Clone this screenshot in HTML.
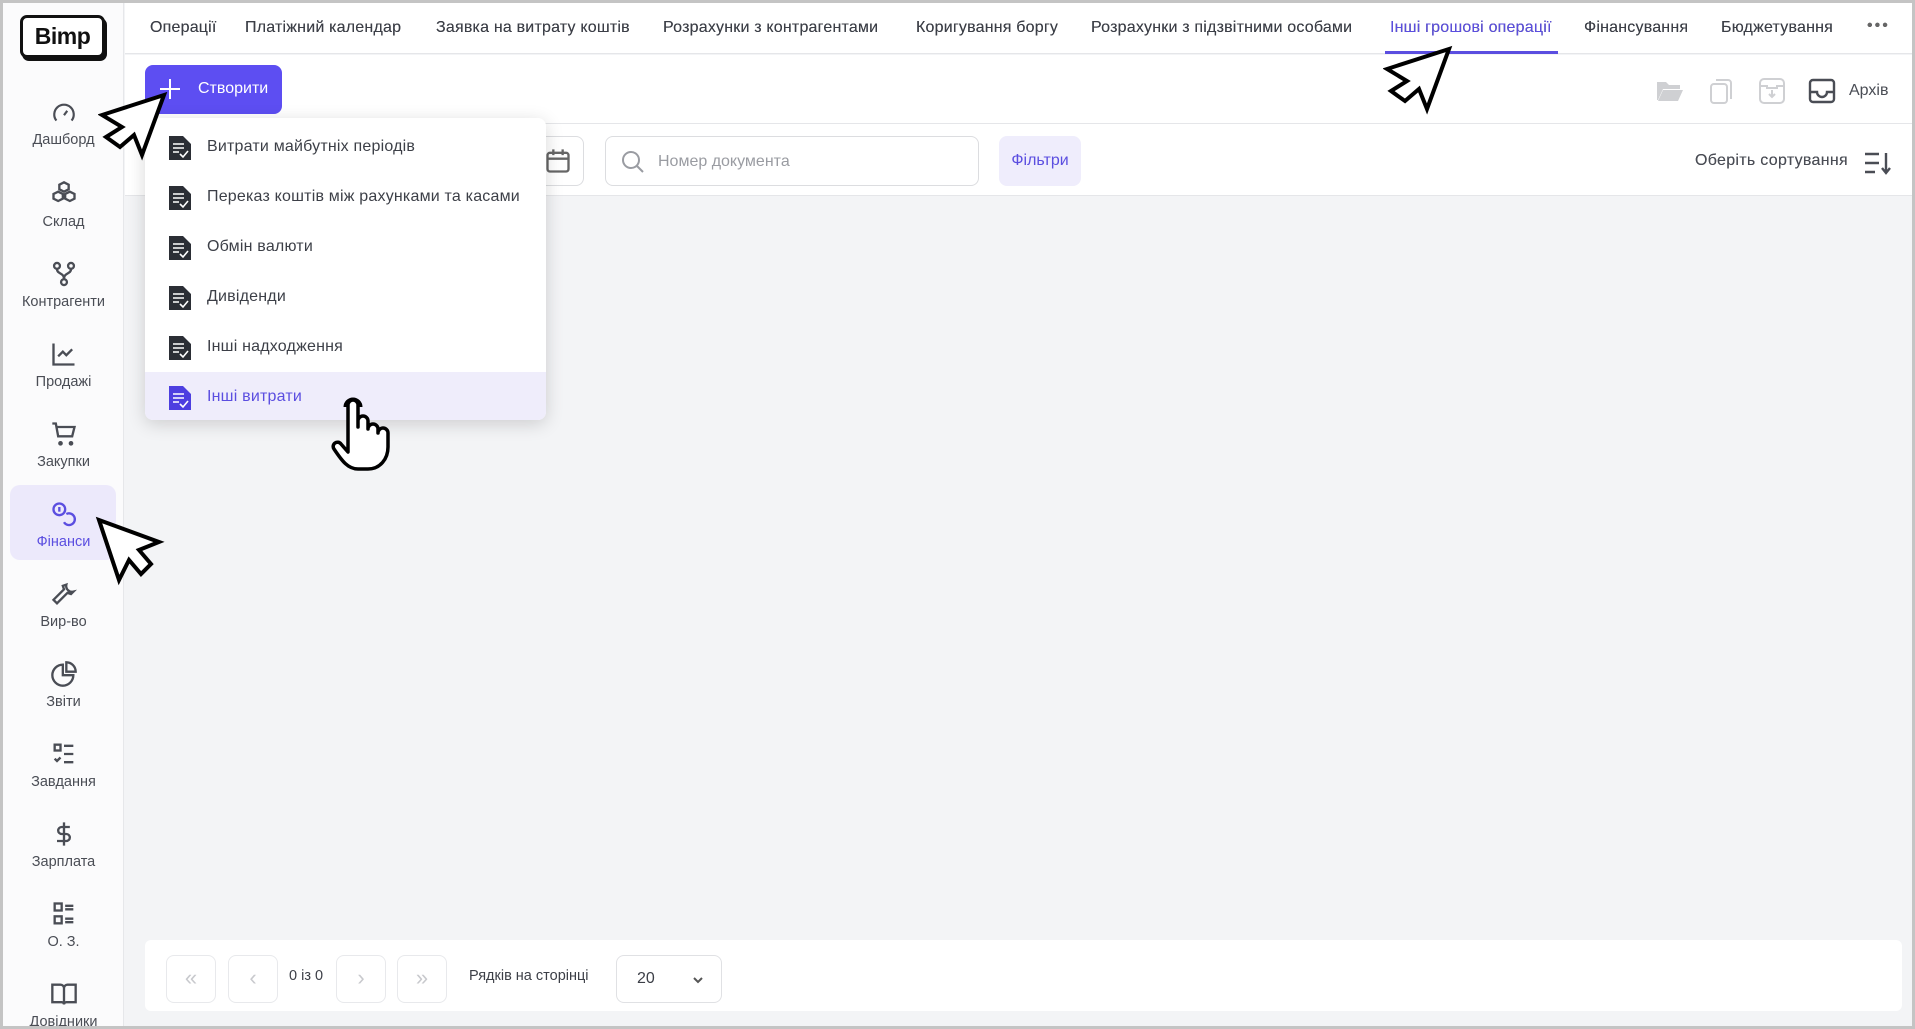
<!DOCTYPE html>
<html><head><meta charset="utf-8"><style>
*{box-sizing:border-box;margin:0;padding:0}
body{width:1915px;height:1029px;overflow:hidden;background:#c4c4c4;font-family:"Liberation Sans","Noto Sans CJK SC",sans-serif;color:#3c3f47;position:relative}
.frame{position:absolute;left:3px;top:3px;width:1909px;height:1023px;background:#f3f4f6;overflow:hidden}
.abs{position:absolute}
.side{position:absolute;left:0;top:0;width:121px;height:1023px;background:#fbfbfc;border-right:1px solid #e6e7ea}
.logo{position:absolute;left:17px;top:12px;width:85px;height:43px;border:3px solid #111;border-radius:7px;box-shadow:2px 3px 0 #111;font-weight:bold;font-size:23px;color:#111;text-align:center;line-height:36px;background:#fff;letter-spacing:-0.5px}
.it{position:absolute;left:0;width:121px;text-align:center;font-size:14.5px;color:#4a4d55}
.it svg{display:block;margin:0 auto 6px}
.top{position:absolute;left:122px;top:0;right:0;height:51px;background:#fff;border-bottom:1px solid #e5e6e9}
.tab{position:absolute;top:16px;font-size:16px;color:#3c3f47;white-space:nowrap;text-shadow:0 0 .3px #3c3f47;letter-spacing:0.2px}
.bar{position:absolute;left:122px;top:52px;right:0;height:140px;background:#fff}
.line{position:absolute;left:122px;right:0;height:1px;background:#e5e6e9}
.btn{position:absolute;left:142px;top:62px;width:137px;height:49px;background:#5d4ef2;border-radius:8px;color:#fff;font-size:16px}
.dd{position:absolute;left:142px;top:115px;width:401px;height:302px;background:#fff;border-radius:8px;box-shadow:0 4px 18px rgba(0,0,0,.16)}
.di{position:absolute;left:0;width:401px;height:50px;font-size:16px;color:#3c3f47}
.di svg{position:absolute;left:23px;top:13px}
.di span{position:absolute;left:62px;top:16px;letter-spacing:0.2px}
.pg{position:absolute;left:142px;top:937px;width:1757px;height:71px;background:#fff;border-radius:6px}
.pb{position:absolute;top:15px;width:50px;height:48px;border:1px solid #e8e9ec;border-radius:8px;color:#c8c9cd;font-size:22px;text-align:center;line-height:44px}
</style></head><body><div class="frame">
<div class="side">
<div class="logo">Bimp</div>
<div class="it" style="top:97px"><svg width="26" height="26" viewBox="0 0 24 24" fill="none" stroke="#4a4d55" stroke-width="2"><path d="M5 19a9 9 0 1 1 14 0"/><path d="M12 14l3-4"/></svg>Дашборд</div>
<div class="it" style="top:177px"><svg width="28" height="28" viewBox="0 0 24 24" fill="none" stroke="#4a4d55" stroke-width="2"><path d="M12 2l4 2v4l-4 2-4-2V4z M7 10l4 2v4l-4 2-4-2v-4z M17 10l4 2v4l-4 2-4-2v-4z"/></svg>Склад</div>
<div class="it" style="top:257px"><svg width="28" height="28" viewBox="0 0 24 24" fill="none" stroke="#4a4d55" stroke-width="2"><circle cx="6" cy="5" r="2.5"/><circle cx="18" cy="5" r="2.5"/><circle cx="12" cy="19" r="2.5"/><path d="M6 8c0 4 6 3 6 8M18 8c0 4-6 3-6 8"/></svg>Контрагенти</div>
<div class="it" style="top:337px"><svg width="28" height="28" viewBox="0 0 24 24" fill="none" stroke="#4a4d55" stroke-width="2"><path d="M3 3v18h18M7 14l4-4 3 3 5-5"/></svg>Продажі</div>
<div class="it" style="top:417px"><svg width="28" height="28" viewBox="0 0 24 24" fill="none" stroke="#4a4d55" stroke-width="2"><path d="M2 3h3l2 11h12l2-8H6"/><circle cx="9" cy="20" r="1"/><circle cx="18" cy="20" r="1"/></svg>Закупки</div>
<div class="abs" style="left:7px;top:482px;width:106px;height:75px;background:#ece9fb;border-radius:10px"></div>
<div class="it" style="top:497px;color:#5b4ee0"><svg width="28" height="28" viewBox="0 0 24 24" fill="none" stroke="#5b4ee0" stroke-width="2"><circle cx="8" cy="8" r="5"/><path d="M8 6v4"/><path d="M14 12a5 5 0 1 1-2 7"/></svg>Фінанси</div>
<div class="it" style="top:577px"><svg width="28" height="28" viewBox="0 0 24 24" fill="none" stroke="#4a4d55" stroke-width="2"><path d="M14 4a5 5 0 0 0 6 6l-2 2-3-1-9 9-3-3 9-9-1-3z"/></svg>Вир-во</div>
<div class="it" style="top:657px"><svg width="28" height="28" viewBox="0 0 24 24" fill="none" stroke="#4a4d55" stroke-width="2"><path d="M11 4a9 9 0 1 0 9 9h-9z"/><path d="M14 2a8 8 0 0 1 8 8h-8z"/></svg>Звіти</div>
<div class="it" style="top:737px"><svg width="28" height="28" viewBox="0 0 24 24" fill="none" stroke="#4a4d55" stroke-width="2"><rect x="4" y="4" width="5" height="5"/><path d="M12 5h8M12 12h8M12 19h8M4 16l2 2 3-3"/></svg>Завдання</div>
<div class="it" style="top:817px"><svg width="28" height="28" viewBox="0 0 24 24" fill="none" stroke="#4a4d55" stroke-width="2"><path d="M12 2v20M17 6H10a3 3 0 0 0 0 6h4a3 3 0 0 1 0 6H6"/></svg>Зарплата</div>
<div class="it" style="top:897px"><svg width="28" height="28" viewBox="0 0 24 24" fill="none" stroke="#4a4d55" stroke-width="2"><rect x="4" y="3" width="6" height="6"/><rect x="4" y="14" width="6" height="6"/><path d="M13 5h7M13 8h7M13 16h7M13 19h7"/></svg>О. З.</div>
<div class="it" style="top:977px"><svg width="28" height="28" viewBox="0 0 24 24" fill="none" stroke="#4a4d55" stroke-width="2"><path d="M2 4h7a3 3 0 0 1 3 3v14a2 2 0 0 0-2-2H2zM22 4h-7a3 3 0 0 0-3 3v14a2 2 0 0 1 2-2h8z"/></svg>Довідники</div>
</div>
<div class="top">
<div class="tab" style="left:25px">Операції</div>
<div class="tab" style="left:120px">Платіжний календар</div>
<div class="tab" style="left:311px">Заявка на витрату коштів</div>
<div class="tab" style="left:538px">Розрахунки з контрагентами</div>
<div class="tab" style="left:791px">Коригування боргу</div>
<div class="tab" style="left:966px">Розрахунки з підзвітними особами</div>
<div class="tab" style="left:1265px;color:#5b4ee0">Інші грошові операції</div>
<div class="abs" style="left:1260px;top:48px;width:173px;height:3px;background:#5b4ee0"></div>
<div class="tab" style="left:1459px">Фінансування</div>
<div class="tab" style="left:1596px">Бюджетування</div>
<div class="tab" style="left:1742px;font-size:16px;top:14px;letter-spacing:2px;color:#666">•••</div>
</div>
<div class="bar"></div>
<div class="line" style="top:120px"></div>
<div class="line" style="top:192px"></div>
<div class="btn"><svg class="abs" style="left:14px;top:13px" width="22" height="22" viewBox="0 0 22 22" stroke="#fff" stroke-width="2"><path d="M11 1v20M1 11h20"/></svg><span class="abs" style="left:53px;top:15px">Створити</span></div>
<svg class="abs" style="left:1652px;top:75px" width="30" height="26" viewBox="0 0 30 26"><path d="M2 4h9l3 3h11v4H8L3 22H2z M8 12h20l-5 11H3z" fill="#cfd0d3"/></svg>
<svg class="abs" style="left:1705px;top:74px" width="26" height="28" viewBox="0 0 26 28" fill="none" stroke="#cfd0d3" stroke-width="2"><rect x="3" y="7" width="16" height="19" rx="3"/><path d="M8 3h12a3 3 0 0 1 3 3v16"/></svg>
<svg class="abs" style="left:1755px;top:74px" width="28" height="28" viewBox="0 0 28 28" fill="none" stroke="#cfd0d3" stroke-width="2"><rect x="2" y="2" width="24" height="24" rx="4"/><path d="M2 9h7v2h10V9h7M14 13v7M11 17l3 3 3-3"/></svg>
<svg class="abs" style="left:1805px;top:75px" width="28" height="26" viewBox="0 0 28 26" fill="none" stroke="#4a4d55" stroke-width="2.4"><rect x="2" y="2" width="24" height="22" rx="3"/><path d="M2 14h7a5 5 0 0 0 10 0h7"/></svg>
<div class="abs" style="left:1846px;top:79px;font-size:16px;color:#4a4d55">Архів</div>
<div class="abs" style="left:520px;top:133px;width:61px;height:50px;border:1px solid #dcdde0;border-radius:8px;background:#fff"></div>
<svg class="abs" style="left:541px;top:144px" width="28" height="28" viewBox="0 0 24 24" fill="none" stroke="#666" stroke-width="2"><rect x="3" y="5" width="18" height="16" rx="2"/><path d="M3 10h18M8 2v5M16 2v5"/></svg>
<div class="abs" style="left:602px;top:133px;width:374px;height:50px;border:1px solid #dcdde0;border-radius:8px;background:#fff"><svg class="abs" style="left:14px;top:12px" width="26" height="26" viewBox="0 0 26 26" fill="none" stroke="#9a9ca2" stroke-width="2"><circle cx="11" cy="11" r="8"/><path d="M17 17l6 6"/></svg><span class="abs" style="left:52px;top:16px;font-size:16px;color:#9a9ca2">Номер документа</span></div>
<div class="abs" style="left:996px;top:133px;width:82px;height:50px;background:#efedfc;border-radius:8px;color:#5b4ee0;font-size:16px;text-align:center;line-height:50px">Фільтри</div>
<div class="abs" style="left:1692px;top:149px;font-size:16px;color:#4a4d55;text-shadow:0 0 .3px #4a4d55;letter-spacing:0.3px">Оберіть сортування</div>
<svg class="abs" style="left:1860px;top:147px" width="30" height="26" viewBox="0 0 30 26" stroke="#4a4d55" stroke-width="2.4" fill="none"><path d="M2 4h14M2 13h14M2 22h10M23 3v20M19 18l4 5 4-5"/></svg>

<div class="pg">
<div class="pb" style="left:21px">«</div>
<div class="pb" style="left:83px">‹</div>
<div class="abs" style="left:144px;top:28px;font-size:14.5px;color:#3c3f47">0 із 0</div>
<div class="pb" style="left:191px">›</div>
<div class="pb" style="left:252px">»</div>
<div class="abs" style="left:324px;top:28px;font-size:14.5px;color:#3c3f47">Рядків на сторінці</div>
<div class="abs" style="left:471px;top:15px;width:106px;height:48px;border:1px solid #e0e1e4;border-radius:8px"><span class="abs" style="left:20px;top:14px;font-size:16px">20</span><svg class="abs" style="left:75px;top:19px" width="12" height="10" viewBox="0 0 12 10"><path d="M2 3l4 4 4-4" stroke="#555" stroke-width="2" fill="none"/></svg></div>
</div>

<div class="dd">
<div class="di" style="top:4px"><svg width="24" height="26" viewBox="0 0 24 26"><path d="M1 1h14l8 8v16H1z" fill="#2b2e35"/><path d="M5 9h11M5 13h11M5 17h6M12 19l3 3 5-6" stroke="#fff" stroke-width="1.6" fill="none"/></svg><span>Витрати майбутніх періодів</span></div>
<div class="di" style="top:54px"><svg width="24" height="26" viewBox="0 0 24 26"><path d="M1 1h14l8 8v16H1z" fill="#2b2e35"/><path d="M5 9h11M5 13h11M5 17h6M12 19l3 3 5-6" stroke="#fff" stroke-width="1.6" fill="none"/></svg><span>Переказ коштів між рахунками та касами</span></div>
<div class="di" style="top:104px"><svg width="24" height="26" viewBox="0 0 24 26"><path d="M1 1h14l8 8v16H1z" fill="#2b2e35"/><path d="M5 9h11M5 13h11M5 17h6M12 19l3 3 5-6" stroke="#fff" stroke-width="1.6" fill="none"/></svg><span>Обмін валюти</span></div>
<div class="di" style="top:154px"><svg width="24" height="26" viewBox="0 0 24 26"><path d="M1 1h14l8 8v16H1z" fill="#2b2e35"/><path d="M5 9h11M5 13h11M5 17h6M12 19l3 3 5-6" stroke="#fff" stroke-width="1.6" fill="none"/></svg><span>Дивіденди</span></div>
<div class="di" style="top:204px"><svg width="24" height="26" viewBox="0 0 24 26"><path d="M1 1h14l8 8v16H1z" fill="#2b2e35"/><path d="M5 9h11M5 13h11M5 17h6M12 19l3 3 5-6" stroke="#fff" stroke-width="1.6" fill="none"/></svg><span>Інші надходження</span></div>
<div class="di" style="top:254px;height:48px;background:#efedfb;border-radius:0 0 8px 8px;color:#5b4ee0"><svg width="24" height="26" viewBox="0 0 24 26"><path d="M1 1h14l8 8v16H1z" fill="#4d3fe0"/><path d="M5 9h11M5 13h11M5 17h6M12 19l3 3 5-6" stroke="#fff" stroke-width="1.6" fill="none"/></svg><span>Інші витрати</span></div>
</div>

<svg class="abs" style="left:95px;top:88px" width="72" height="72" viewBox="0 0 72 72"><path d="M66 4L44 64 36 44 22 56 8 46 24 36 4 24z" fill="#fff" stroke="#000" stroke-width="4" stroke-linejoin="miter"/></svg>
<svg class="abs" style="left:1380px;top:42px" width="72" height="72" viewBox="0 0 72 72"><path d="M66 4L44 64 36 44 22 56 8 46 24 36 4 24z" fill="#fff" stroke="#000" stroke-width="4"/></svg>
<svg class="abs" style="left:92px;top:513px" width="72" height="72" viewBox="0 0 72 72"><path d="M4 4L64 26 44 34 56 48 46 58 34 44 24 64z" fill="#fff" stroke="#000" stroke-width="4"/></svg>
<svg class="abs" style="left:325px;top:392px" width="66" height="78" viewBox="0 0 66 78"><path d="M20 40V10a5 5 0 0 1 10 0v22V26a5 5 0 0 1 10 0v8a5 5 0 0 1 10 0v4a5 5 0 0 1 10 0v14c0 12-8 22-20 22H30C20 74 14 66 6 54a4 4 0 0 1 7-5l7 8z" fill="#fff" stroke="#000" stroke-width="3.5" stroke-linejoin="round"/><path d="M17 12a8 8 0 0 1 16 0" fill="none" stroke="#000" stroke-width="3"/></svg>
</div></body></html>
